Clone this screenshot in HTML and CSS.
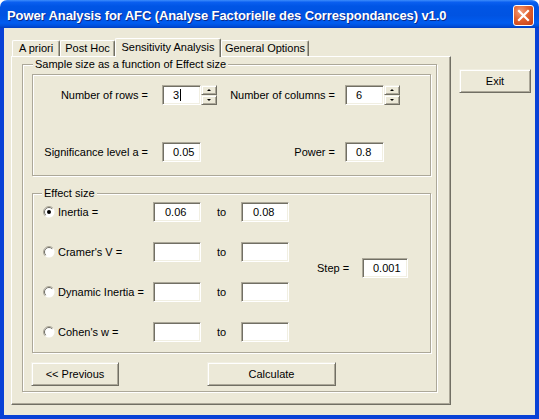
FILE: index.html
```html
<!DOCTYPE html>
<html lang="en">

<head>
    <meta charset="UTF-8">
    <meta name="viewport" content="width=device-width, initial-scale=1.0">
    <title>Power Analysis for AFC</title>
    <link rel="stylesheet" href="styles.css">
</head>

<body>
    <div class="window">
        <div class="titlebar">
            <span class="title">Power Analysis for AFC (Analyse Factorielle des Correspondances) v1.0</span>
            <span class="close">
                <svg width="19" height="19" viewBox="0 0 19 19">
                    <path d="M5 5 L14 14 M14 5 L5 14" stroke="#fff" stroke-width="2.2" stroke-linecap="square" />
                </svg>
            </span>
        </div>

        <div class="client">
            <div class="tabctl">
                <div class="tabs">
                    <div class="tab t1">A priori</div>
                    <div class="tab t2">Post Hoc</div>
                    <div class="tab t3 on">Sensitivity Analysis</div>
                    <div class="tab t4">General Options</div>
                </div>

                <div class="page">
                    <div class="frame outer">
                        <span class="legend">Sample size as a function of Effect size</span>

                        <div class="frame params">
                            <div class="pgrid">
                                <div class="lbl">Number of rows =</div>
                                <div class="spinbox">
                                    <div class="textbox">3<span class="caret"></span></div>
                                    <div class="spin"><span class="up"></span><span class="down"></span></div>
                                </div>
                                <div class="lbl">Number of columns =</div>
                                <div class="spinbox">
                                    <div class="textbox">6</div>
                                    <div class="spin"><span class="up"></span><span class="down"></span></div>
                                </div>

                                <div class="lbl">Significance level a =</div>
                                <div class="spinbox">
                                    <div class="textbox">0.05</div>
                                </div>
                                <div class="lbl">Power =</div>
                                <div class="spinbox">
                                    <div class="textbox">0.8</div>
                                </div>
                            </div>
                        </div>

                        <div class="frame effect">
                            <span class="legend">Effect size</span>
                            <div class="egrid">
                                <div class="opt">
                                    <svg class="radio" width="12" height="12" viewBox="0 0 12 12">
                                        <circle cx="6" cy="6" r="5.5" fill="#fff" />
                                        <path d="M2.1 9.9 A5.5 5.5 0 0 1 9.9 2.1" fill="none" stroke="#aca899" />
                                        <path d="M2.8 9.2 A4.5 4.5 0 0 1 9.2 2.8" fill="none" stroke="#716f64" />
                                        <circle cx="6" cy="6" r="2" fill="#000" />
                                    </svg>
                                    Inertia =
                                </div>
                                <div class="textbox wide">0.06</div>
                                <div class="to">to</div>
                                <div class="textbox wide">0.08</div>

                                <div class="opt">
                                    <svg class="radio" width="12" height="12" viewBox="0 0 12 12">
                                        <circle cx="6" cy="6" r="5.5" fill="#fff" />
                                        <path d="M2.1 9.9 A5.5 5.5 0 0 1 9.9 2.1" fill="none" stroke="#aca899" />
                                        <path d="M2.8 9.2 A4.5 4.5 0 0 1 9.2 2.8" fill="none" stroke="#716f64" />
                                    </svg>
                                    Cramer's V =
                                </div>
                                <div class="textbox wide"></div>
                                <div class="to">to</div>
                                <div class="textbox wide"></div>

                                <div class="opt">
                                    <svg class="radio" width="12" height="12" viewBox="0 0 12 12">
                                        <circle cx="6" cy="6" r="5.5" fill="#fff" />
                                        <path d="M2.1 9.9 A5.5 5.5 0 0 1 9.9 2.1" fill="none" stroke="#aca899" />
                                        <path d="M2.8 9.2 A4.5 4.5 0 0 1 9.2 2.8" fill="none" stroke="#716f64" />
                                    </svg>
                                    Dynamic Inertia =
                                </div>
                                <div class="textbox wide"></div>
                                <div class="to">to</div>
                                <div class="textbox wide"></div>

                                <div class="opt">
                                    <svg class="radio" width="12" height="12" viewBox="0 0 12 12">
                                        <circle cx="6" cy="6" r="5.5" fill="#fff" />
                                        <path d="M2.1 9.9 A5.5 5.5 0 0 1 9.9 2.1" fill="none" stroke="#aca899" />
                                        <path d="M2.8 9.2 A4.5 4.5 0 0 1 9.2 2.8" fill="none" stroke="#716f64" />
                                    </svg>
                                    Cohen's w =
                                </div>
                                <div class="textbox wide"></div>
                                <div class="to">to</div>
                                <div class="textbox wide"></div>

                                <div class="step">Step =</div>
                                <div class="textbox stepbox">0.001</div>
                            </div>
                        </div>

                        <div class="btnrow">
                            <button class="btn prev">&lt;&lt; Previous</button>
                            <button class="btn calc">Calculate</button>
                        </div>
                    </div>
                </div>
            </div>

            <div class="side">
                <button class="btn exit">Exit</button>
            </div>
        </div>
    </div>
</body>

</html>
```

FILE: styles.css
```css
* {
    margin: 0;
    padding: 0;
    box-sizing: border-box;
}

body {
    background: #fff;
    font-family: "Liberation Sans", Arial, sans-serif;
    font-size: 11px;
    color: #000;
}

.window {
    width: 539px;
    height: 419px;
    display: flex;
    flex-direction: column;
}

/* title bar */
.titlebar {
    height: 28px;
    flex: none;
    display: flex;
    align-items: flex-start;
    padding: 5px 5px 0 7px;
    border-radius: 7px 7px 0 0;
    background: linear-gradient(to bottom, #3d8dfb 0%, #0a5ff0 8%, #0055e5 22%, #0053e2 55%, #005cf0 82%, #0050dc 92%, #003ec2 100%);
}

.title {
    flex: 1;
    color: #fff;
    font-weight: bold;
    font-size: 13px;
    letter-spacing: -0.1px;
    line-height: 21px;
    white-space: nowrap;
    text-shadow: 1px 1px 0 #0b2a8a;
}

.close {
    width: 21px;
    height: 21px;
    border: 1px solid #fff;
    border-radius: 3px;
    background: radial-gradient(circle at 35% 30%, #f3a07e 0%, #e2622f 45%, #c33b16 100%);
    display: flex;
    align-items: center;
    justify-content: center;
}

/* client area */
.client {
    flex: 1;
    display: flex;
    align-items: flex-start;
    background: #ece9d8;
    border: 4px solid #0841d6;
    border-top: none;
}

.tabctl {
    width: 440px;
    margin-left: 7px;
    display: flex;
    flex-direction: column;
}

.tabs {
    height: 18px;
    margin-top: 10px;
    padding-left: 1px;
    display: flex;
    align-items: flex-end;
    position: relative;
    z-index: 1;
}

.tab {
    height: 16px;
    line-height: 15px;
    text-align: center;
    white-space: nowrap;
    background: #ece9d8;
    border-top: 1px solid #fff;
    border-left: 1px solid #fff;
    border-right: 1px solid #716f64;
    box-shadow: inset -1px 0 #aca899;
    border-radius: 2px 2px 0 0;
}

.tab.on {
    height: 19px;
    margin-bottom: -1px;
    line-height: 16px;
}

.t1 { width: 48px; }
.t2 { width: 55px; }
.t3 { width: 106px; }
.t4 { width: 88px; }

.page {
    height: 349px;
    padding: 7px 0 0 10px;
    border: 1px solid;
    border-color: #fff #716f64 #716f64 #fff;
    box-shadow: inset -1px -1px #aca899;
}

/* etched frames */
.frame {
    position: relative;
    border: 1px solid #aca899;
    box-shadow: 1px 1px 0 #fff, inset 1px 1px 0 #fff;
}

.legend {
    position: absolute;
    top: -7px;
    left: 10px;
    padding: 0 2px;
    line-height: 13px;
    background: #ece9d8;
    white-space: nowrap;
}

.outer {
    width: 415px;
    height: 328px;
    padding: 9px 0 0 9px;
    display: flex;
    flex-direction: column;
}

.params {
    width: 399px;
    height: 102px;
}

.effect {
    width: 399px;
    height: 160px;
    margin-top: 17px;
}

.effect .legend {
    left: 9px;
}

.pgrid {
    display: grid;
    grid-template-columns: 129px 55px 128px 55px;
    grid-template-rows: 20px 20px;
    row-gap: 37px;
    align-items: center;
    padding-top: 10px;
}

.pgrid .lbl {
    text-align: right;
    padding-right: 14px;
    white-space: nowrap;
}

.pgrid .lbl:nth-child(3),
.pgrid .lbl:nth-child(7) {
    padding-right: 10px;
}

.spinbox {
    display: flex;
    height: 20px;
}

.textbox {
    width: 39px;
    height: 20px;
    line-height: 18px;
    padding-left: 10px;
    background: #fff;
    border: 1px solid;
    border-color: #aca899 #fff #fff #aca899;
    box-shadow: inset 1px 1px #716f64, inset -1px -1px #f1efe2;
    white-space: nowrap;
}

.caret {
    display: inline-block;
    width: 1px;
    height: 12px;
    margin-left: 1px;
    background: #000;
    vertical-align: -2px;
}

.spin {
    width: 16px;
    height: 20px;
    display: flex;
    flex-direction: column;
}

.spin span {
    flex: 1;
    display: flex;
    align-items: center;
    justify-content: center;
    background: #ece9d8;
    border: 1px solid;
    border-color: #f1efe2 #716f64 #716f64 #f1efe2;
    box-shadow: inset 1px 1px #fff, inset -1px -1px #aca899;
}

.spin span::after {
    content: "";
    width: 0;
    height: 0;
    border-left: 2px solid transparent;
    border-right: 2px solid transparent;
}

.spin .up::after {
    border-bottom: 2px solid #000;
}

.spin .down::after {
    border-top: 2px solid #000;
}

/* effect size grid */
.egrid {
    display: grid;
    grid-template-columns: 110px 48px 40px 48px 73px 46px;
    grid-template-rows: repeat(4, 20px);
    row-gap: 20px;
    align-items: center;
    padding: 8px 0 0 10px;
}

.opt {
    grid-column: 1;
    display: flex;
    align-items: center;
    gap: 3px;
    white-space: nowrap;
}

.radio {
    flex: none;
}

.textbox.wide {
    width: 48px;
    padding-left: 11px;
}

.to {
    padding-left: 16px;
}

.step {
    grid-column: 5;
    grid-row: 2 / span 2;
    align-self: start;
    margin-top: 16px;
    line-height: 20px;
    padding-left: 28px;
}

.textbox.stepbox {
    grid-column: 6;
    grid-row: 2 / span 2;
    align-self: start;
    margin-top: 16px;
    width: 46px;
}

/* buttons */
.btn {
    height: 24px;
    font-family: inherit;
    font-size: 11px;
    color: #000;
    background: #ece9d8;
    border: 1px solid;
    border-color: #f1efe2 #716f64 #716f64 #f1efe2;
    box-shadow: inset 1px 1px #fff, inset -1px -1px #aca899;
}

.btnrow {
    display: flex;
    gap: 88px;
    margin-top: 9px;
    margin-left: -1px;
}

.prev { width: 88px; }
.calc { width: 129px; }

.side {
    margin-left: 8px;
    margin-top: 41px;
}

.exit {
    width: 72px;
}
```
